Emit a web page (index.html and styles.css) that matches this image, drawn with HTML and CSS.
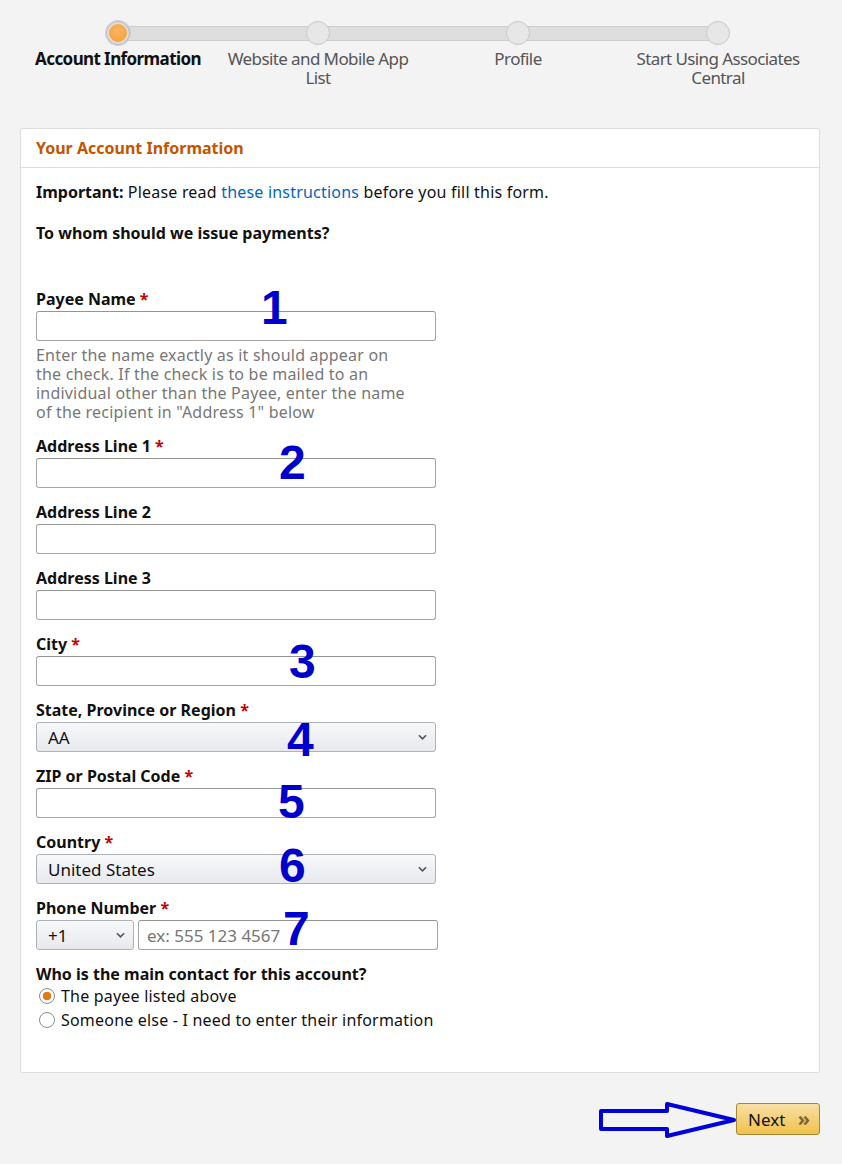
FILE: index.html
```html
<!DOCTYPE html>
<html lang="en">
<head>
  <meta charset="UTF-8">
  <meta name="viewport" content="width=device-width, initial-scale=1.0">
  <title>Your Account Information</title>
  <link rel="stylesheet" href="styles.css">
</head>
<body>
<div class="page">
  <ol class="stepper">
    <li class="step current"><span class="dot"></span><span class="step-label">Account Information</span></li>
    <li class="step"><span class="dot"></span><span class="step-label">Website and Mobile App List</span></li>
    <li class="step"><span class="dot"></span><span class="step-label">Profile</span></li>
    <li class="step"><span class="dot"></span><span class="step-label">Start Using Associates Central</span></li>
  </ol>

  <section class="card">
    <h2 class="card-title">Your Account Information</h2>
    <div class="card-body">
      <p class="intro"><b>Important:</b> Please read <a href="#">these instructions</a> before you fill this form.</p>
      <h3 class="question">To whom should we issue payments?</h3>

      <div class="field">
        <label>Payee Name <i>*</i></label>
        <input type="text">
        <p class="hint">Enter the name exactly as it should appear on the check. If the check is to be mailed to an individual other than the Payee, enter the name of the recipient in "Address 1" below</p>
      </div>
      <div class="field">
        <label>Address Line 1 <i>*</i></label>
        <input type="text">
      </div>
      <div class="field">
        <label>Address Line 2</label>
        <input type="text">
      </div>
      <div class="field">
        <label>Address Line 3</label>
        <input type="text">
      </div>
      <div class="field">
        <label>City <i>*</i></label>
        <input type="text">
      </div>
      <div class="field">
        <label>State, Province or Region <i>*</i></label>
        <span class="select">
          <select><option>AA</option></select>
          <svg class="chev" viewBox="0 0 10 6"><path d="M1 1l4 4 4-4"/></svg>
        </span>
      </div>
      <div class="field">
        <label>ZIP or Postal Code <i>*</i></label>
        <input type="text">
      </div>
      <div class="field">
        <label>Country <i>*</i></label>
        <span class="select">
          <select><option>United States</option></select>
          <svg class="chev" viewBox="0 0 10 6"><path d="M1 1l4 4 4-4"/></svg>
        </span>
      </div>
      <div class="field">
        <label>Phone Number <i>*</i></label>
        <div class="phone">
          <span class="select code">
            <select><option>+1</option></select>
            <svg class="chev" viewBox="0 0 10 6"><path d="M1 1l4 4 4-4"/></svg>
          </span>
          <input type="text" placeholder="ex: 555 123 4567">
        </div>
      </div>

      <div class="contact">
        <h3 class="question">Who is the main contact for this account?</h3>
        <label class="radio"><input type="radio" name="contact" checked> The payee listed above</label>
        <label class="radio"><input type="radio" name="contact"> Someone else - I need to enter their information</label>
      </div>
    </div>
  </section>

  <div class="actions">
    <button class="next">Next <span class="raquo">&raquo;</span></button>
  </div>
</div>

<!-- annotations drawn over the screenshot -->
<span class="mark" style="left:261px;top:284px">1</span>
<span class="mark" style="left:279px;top:439px">2</span>
<span class="mark" style="left:289px;top:638px">3</span>
<span class="mark" style="left:287px;top:716px">4</span>
<span class="mark" style="left:278px;top:778px">5</span>
<span class="mark" style="left:279px;top:842px">6</span>
<span class="mark" style="left:283px;top:905px">7</span>
<svg class="arrow" width="142" height="40" viewBox="598 1100 142 40">
  <path d="M601 1111H667V1104L734 1120L667 1136V1129H601Z"/>
</svg>
</body>
</html>
```

FILE: styles.css
```css
body {
  margin: 0;
  background: #f3f3f3;
  font-family: "Noto Sans", "Open Sans", sans-serif;
  font-size: 16px;
  letter-spacing: 0.2px;
  color: #111;
  position: relative;
}
.page {
  width: 800px;
  padding: 21px 22px 30px 20px;
}

/* stepper */
.stepper {
  list-style: none;
  margin: 0 0 0 -2px;
  padding: 0;
  display: flex;
  position: relative;
}
.stepper::before {
  content: "";
  position: absolute;
  left: 100px;
  right: 100px;
  top: 5px;
  height: 13px;
  background: #dedede;
  border-top: 1px solid #cdcdcd;
  border-bottom: 1px solid #cdcdcd;
}
.step {
  width: 200px;
  display: flex;
  flex-direction: column;
  align-items: center;
  position: relative;
}
.dot {
  width: 22px;
  height: 22px;
  border-radius: 50%;
  background: #e7e7e7;
  border: 1px solid #c9c9c9;
}
.current .dot {
  background: radial-gradient(circle at 50% 40%, #fdb462, #f39a2e);
  border: 1px solid #bbb;
  box-shadow: 0 0 0 2px #dedede inset, 0 0 0 1px #d0d0d0;
  background-clip: padding-box;
}
.step-label {
  margin-top: 4px;
  width: 196px;
  font-size: 17px;
  line-height: 19px;
  letter-spacing: -0.6px;
  color: #555;
  text-align: center;
}
.current .step-label {
  color: #111;
  font-weight: bold;
}

/* card */
.card {
  margin-top: 41px;
  background: #fff;
  border: 1px solid #ddd;
  border-radius: 2px;
}
.card-title {
  margin: 0;
  padding: 0 15px;
  height: 38px;
  line-height: 38px;
  font-size: 16px;
  letter-spacing: 0;
  color: #c45500;
  border-bottom: 1px solid #ddd;
}
.card-body {
  padding: 14px 15px 40px;
}
.intro {
  margin: 0;
  line-height: 20px;
}
.intro b {
  letter-spacing: 0;
}
.intro a {
  color: #0066c0;
  text-decoration: none;
}
.question {
  margin: 21px 0 46px;
  font-size: 16px;
  letter-spacing: 0;
  line-height: 20px;
}

.field {
  margin-bottom: 14px;
}
.field label {
  display: block;
  font-weight: bold;
  letter-spacing: 0;
  line-height: 20px;
  margin-bottom: 2px;
}
.field label i {
  font-style: normal;
  color: #c40000;
}
.field input {
  box-sizing: border-box;
  width: 400px;
  height: 30px;
  border: 1px solid #a6a6a6;
  border-top-color: #949494;
  border-radius: 3px;
  padding: 0 8px;
  font: inherit;
  font-size: 17px;
  display: block;
}
.field input::placeholder {
  color: #767676;
}
.hint {
  margin: 5px 0 0;
  width: 374px;
  color: #777;
  line-height: 19px;
}

.select {
  position: relative;
  display: block;
  width: 400px;
}
.select select {
  appearance: none;
  box-sizing: border-box;
  width: 100%;
  height: 30px;
  padding: 0 11px;
  border: 1px solid #adb1b8;
  border-radius: 3px;
  background: linear-gradient(#f7f8fa, #e7e9ec);
  font: inherit;
  font-size: 17px;
  color: #111;
  display: block;
}
.chev {
  position: absolute;
  right: 9px;
  top: 12px;
  width: 9px;
  height: 6px;
  fill: none;
  stroke: #555;
  stroke-width: 1.8;
}
.phone {
  display: flex;
  gap: 4px;
}
.select.code {
  width: 98px;
}
.phone input {
  width: 300px;
}

.contact .question {
  margin: 0;
}
.radio {
  display: flex;
  align-items: center;
  gap: 6px;
  line-height: 24px;
  margin-left: 3px;
}
.radio input {
  appearance: none;
  margin: 0;
  width: 16px;
  height: 16px;
  border-radius: 50%;
  border: 1px solid #8d8d8d;
  background: #fff;
}
.radio input:checked {
  border-color: #8d8d8d;
  background: radial-gradient(circle, #e47911 0 4px, #fff 4.5px);
}

.actions {
  display: flex;
  justify-content: flex-end;
  margin-top: 30px;
}
.next {
  width: 84px;
  height: 32px;
  border: 1px solid #a88734;
  border-radius: 3px;
  background: linear-gradient(#f7dfa5, #f0c14b);
  font-family: "Noto Sans", "Open Sans", sans-serif;
  font-size: 17px;
  color: #111;
  padding: 0 0 0 2px;
}
.raquo {
  color: #7a6536;
  font-weight: bold;
  font-size: 20px;
  line-height: 1;
  margin-left: 8px;
}

/* annotations */
.mark {
  position: absolute;
  font-family: "Liberation Sans", Arial, sans-serif;
  font-weight: bold;
  font-size: 48px;
  letter-spacing: 0;
  line-height: 1;
  color: #0000cc;
}
.arrow {
  position: absolute;
  left: 598px;
  top: 1100px;
}
.arrow path {
  fill: none;
  stroke: #0000dd;
  stroke-width: 4;
  stroke-linejoin: round;
}
```
